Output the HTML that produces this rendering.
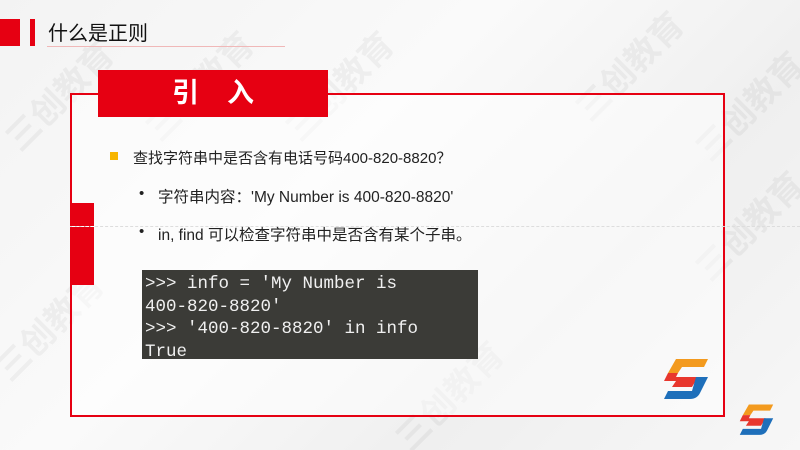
<!DOCTYPE html>
<html><head><meta charset="utf-8"><style>
html,body{margin:0;width:800px;height:450px;overflow:hidden;}
body{position:relative;background:linear-gradient(135deg,#f3f3f3,#fafafa 40%,#efefef 70%,#f7f7f7);font-family:"Liberation Sans","Noto Sans CJK SC",sans-serif;}
.a{position:absolute}
.wm{position:absolute;color:rgba(0,0,0,0.045);font-size:34px;font-weight:bold;transform:rotate(-45deg);white-space:nowrap;font-family:"Noto Sans CJK SC",sans-serif}
.code{font-family:"Liberation Mono","DejaVu Sans Mono",monospace;font-size:17.5px;line-height:22.5px;color:#f0f0f0;white-space:pre}
.t{font-size:15px;color:#222;white-space:nowrap}
</style></head><body>
<div class="wm" style="left:-10px;top:70px">三创教育</div>
<div class="wm" style="left:130px;top:60px">三创教育</div>
<div class="wm" style="left:270px;top:60px">三创教育</div>
<div class="wm" style="left:560px;top:40px">三创教育</div>
<div class="wm" style="left:680px;top:80px">三创教育</div>
<div class="wm" style="left:680px;top:200px">三创教育</div>
<div class="wm" style="left:-20px;top:300px">三创教育</div>
<div class="wm" style="left:380px;top:370px">三创教育</div>
<div class="a" style="left:0;top:19px;width:20px;height:27px;background:#e60012"></div>
<div class="a" style="left:30px;top:19px;width:5px;height:27px;background:#e60012"></div>
<div class="a" style="left:48px;top:17px;font-size:20px;color:#111">什么是正则</div>
<div class="a" style="left:47px;top:46px;width:238px;height:1px;background:#f0b8b8"></div>
<div class="a" style="left:70px;top:93px;width:651px;height:320px;border:2px solid #e60012;background:rgba(255,255,255,0.5)"></div>
<div class="a" style="left:98px;top:70px;width:230px;height:47px;background:#e60012;color:#fff;font-size:27px;font-weight:bold;text-align:center;line-height:47px;letter-spacing:28px;text-indent:28px">引入</div>
<div class="a" style="left:70px;top:203px;width:24px;height:82px;background:#e60012"></div>
<div class="a" style="left:70px;top:226px;width:730px;border-top:1px dashed #ddd"></div>
<div class="a" style="left:72px;top:226px;width:22px;border-top:1px dashed #fff"></div>
<div class="a" style="left:110px;top:152px;width:8px;height:8px;background:#f7b500"></div>
<div class="a t" style="left:133px;top:147px">查找字符串中是否含有电话号码400-820-8820？</div>
<div class="a t" style="left:139px;top:185px">•</div>
<div class="a t" style="left:158px;top:185px;font-size:15.5px">字符串内容：'My Number is 400-820-8820'</div>
<div class="a t" style="left:139px;top:223px">•</div>
<div class="a t" style="left:158px;top:223px;font-size:15.5px">in, find 可以检查字符串中是否含有某个子串。</div>
<div class="a code" style="left:142px;top:270px;width:333px;height:86px;background:#3b3b37;padding-left:3px;padding-top:3px">&gt;&gt;&gt; info = 'My Number is
400-820-8820'
&gt;&gt;&gt; '400-820-8820' in info
True</div>
<svg class="a" style="left:662px;top:357px" width="52" height="50" viewBox="0 0 52 50">
<path d="M14 2 H46 L42 10 H20 L16 16 H6 Z" fill="#f39a1e"/>
<path d="M6 16 H16 L14 20 H36 L30 30 H10 L14 24 H2 Z" fill="#e8372d"/>
<path d="M34 20 H46 L38 36 Q35 42 28 42 H2 L6 34 H30 Z" fill="#1e6fba"/>
</svg>
<svg class="a" style="left:737px;top:403px" width="42" height="38" viewBox="0 0 52 50">
<path d="M14 2 H46 L42 10 H20 L16 16 H6 Z" fill="#f39a1e"/>
<path d="M6 16 H16 L14 20 H36 L30 30 H10 L14 24 H2 Z" fill="#e8372d"/>
<path d="M34 20 H46 L38 36 Q35 42 28 42 H2 L6 34 H30 Z" fill="#1e6fba"/>
</svg>
</body></html>
